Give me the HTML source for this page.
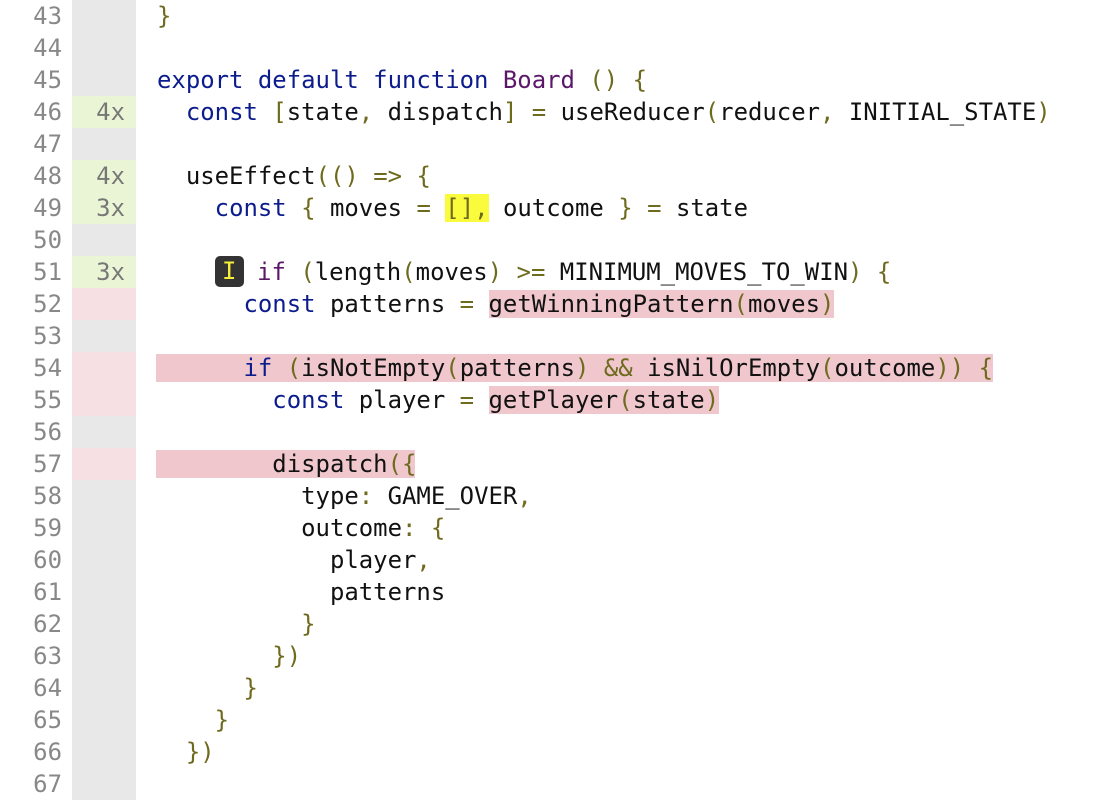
<!DOCTYPE html><html><head><style>
body{margin:0;width:1116px;height:800px;background:#fff;overflow:hidden;font-family:"DejaVu Sans Mono","Liberation Mono",monospace;font-size:23.95px;}
.row{position:relative;height:32px;line-height:32px;white-space:pre;}
.n{position:absolute;left:0;width:62px;text-align:right;color:#888;}
.c{position:absolute;left:72px;width:64px;height:32px;background:#e8e8e8;color:#777;text-align:right;}
.c span{padding-right:11px}
.g{background:#e9f5d5}.p{background:#f7e0e4}
.t{position:absolute;left:157px;color:#111;}
.k{color:#0c1c8c}.o{color:#6e6a1e}.f{color:#5b1869}
.h{background:#efc7cd;display:inline-block;line-height:28px}
.y{background:#fafb3c}
.b{display:inline-block;background:#333;color:#f5ef3a;border-radius:5px;width:29px;height:31px;line-height:31px;text-align:center;vertical-align:middle;margin-top:-4px;margin-right:-1px}
.full{position:absolute;left:156px;top:2px;height:28px;background:#efc7cd}
</style></head><body>
<div class="row"><span class="n">43</span><span class="c"></span><span class="t"><span class="o">}</span></span></div>
<div class="row"><span class="n">44</span><span class="c"></span></div>
<div class="row"><span class="n">45</span><span class="c"></span><span class="t"><span class="k">export default function</span> <span class="f">Board</span> <span class="o">()</span> <span class="o">{</span></span></div>
<div class="row"><span class="n">46</span><span class="c g"><span>4x</span></span><span class="t">  <span class="k">const</span> <span class="o">[</span>state<span class="o">,</span> dispatch<span class="o">]</span> <span class="o">=</span> useReducer<span class="o">(</span>reducer<span class="o">,</span> INITIAL_STATE<span class="o">)</span></span></div>
<div class="row"><span class="n">47</span><span class="c"></span></div>
<div class="row"><span class="n">48</span><span class="c g"><span>4x</span></span><span class="t">  useEffect<span class="o">(()</span> <span class="o">=&gt;</span> <span class="o">{</span></span></div>
<div class="row"><span class="n">49</span><span class="c g"><span>3x</span></span><span class="t">    <span class="k">const</span> <span class="o">{</span> moves <span class="o">=</span> <span class="y"><span class="o">[],</span></span> outcome <span class="o">}</span> <span class="o">=</span> state</span></div>
<div class="row"><span class="n">50</span><span class="c"></span></div>
<div class="row"><span class="n">51</span><span class="c g"><span>3x</span></span><span class="t">    <span class="b">I</span> <span class="f">if</span> <span class="o">(</span>length<span class="o">(</span>moves<span class="o">)</span> <span class="o">&gt;=</span> MINIMUM_MOVES_TO_WIN<span class="o">)</span> <span class="o">{</span></span></div>
<div class="row"><span class="n">52</span><span class="c p"></span><span class="t">      <span class="k">const</span> patterns <span class="o">=</span> <span class="h">getWinningPattern<span class="o">(</span>moves<span class="o">)</span></span></span></div>
<div class="row"><span class="n">53</span><span class="c"></span></div>
<div class="row"><span class="n">54</span><span class="c p"></span><span class="full" style="width:837px"></span><span class="t">      <span class="k">if</span> <span class="o">(</span>isNotEmpty<span class="o">(</span>patterns<span class="o">)</span> <span class="o">&amp;&amp;</span> isNilOrEmpty<span class="o">(</span>outcome<span class="o">))</span> <span class="o">{</span></span></div>
<div class="row"><span class="n">55</span><span class="c p"></span><span class="t">        <span class="k">const</span> player <span class="o">=</span> <span class="h">getPlayer<span class="o">(</span>state<span class="o">)</span></span></span></div>
<div class="row"><span class="n">56</span><span class="c"></span></div>
<div class="row"><span class="n">57</span><span class="c p"></span><span class="full" style="width:259px"></span><span class="t">        dispatch<span class="o">({</span></span></div>
<div class="row"><span class="n">58</span><span class="c"></span><span class="t">          type<span class="o">:</span> GAME_OVER<span class="o">,</span></span></div>
<div class="row"><span class="n">59</span><span class="c"></span><span class="t">          outcome<span class="o">:</span> <span class="o">{</span></span></div>
<div class="row"><span class="n">60</span><span class="c"></span><span class="t">            player<span class="o">,</span></span></div>
<div class="row"><span class="n">61</span><span class="c"></span><span class="t">            patterns</span></div>
<div class="row"><span class="n">62</span><span class="c"></span><span class="t">          <span class="o">}</span></span></div>
<div class="row"><span class="n">63</span><span class="c"></span><span class="t">        <span class="o">})</span></span></div>
<div class="row"><span class="n">64</span><span class="c"></span><span class="t">      <span class="o">}</span></span></div>
<div class="row"><span class="n">65</span><span class="c"></span><span class="t">    <span class="o">}</span></span></div>
<div class="row"><span class="n">66</span><span class="c"></span><span class="t">  <span class="o">})</span></span></div>
<div class="row"><span class="n">67</span><span class="c"></span></div>
</body></html>
